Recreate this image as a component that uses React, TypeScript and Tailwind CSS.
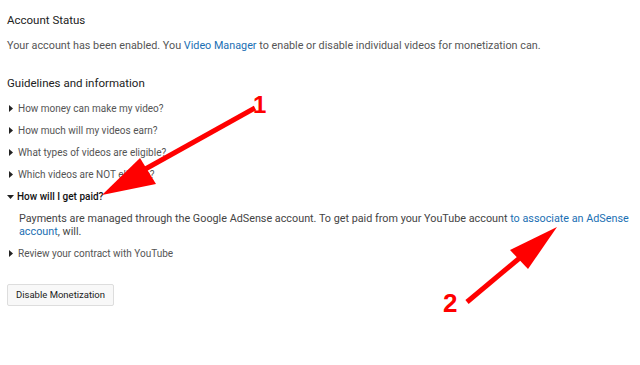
import React from "react";

const items = [
  "How money can make my video?",
  "How much will my videos earn?",
  "What types of videos are eligible?",
  "Which videos are NOT eligible?",
];

function Caret({ open }: { open?: boolean }) {
  return (
    <svg width="7" height="7" viewBox="0 0 7 7" className="shrink-0">
      {open ? <path d="M0 2 L7 2 L3.5 6 Z" fill="#222" /> : <path d="M1 0 L5 3.5 L1 7 Z" fill="#222" />}
    </svg>
  );
}

function Arrows() {
  return (
    <svg className="absolute inset-0 pointer-events-none" width="640" height="365" viewBox="0 0 640 365">
      <line x1="255" y1="108" x2="140" y2="172" stroke="#f00" strokeWidth="5" />
      <path d="M102 195 L140 158 L156 184 Z" fill="#f00" />
      <text x="253" y="113" fill="#f00" fontSize="24" fontWeight="bold" fontFamily="Liberation Sans, Arial, sans-serif">1</text>
      <line x1="467" y1="302" x2="522" y2="256" stroke="#f00" strokeWidth="5" />
      <path d="M557 227 L510 250 L528 269 Z" fill="#f00" />
      <text x="443" y="312" fill="#f00" fontSize="26" fontWeight="bold" fontFamily="Liberation Sans, Arial, sans-serif">2</text>
    </svg>
  );
}

export default function App() {
  return (
    <div className="relative w-[640px] h-[365px] bg-white overflow-hidden font-['Roboto',sans-serif]">
      <div className="px-[7px] pt-[13px]">
        <h2 className="text-[11.5px] leading-[15px] text-[#222]">Account Status</h2>
        <p className="mt-[11px] text-[10.8px] leading-[14px] text-[#555]">
          Your account has been enabled. You <span className="text-[#1a6fb3]">Video Manager</span> to enable or disable
          individual videos for monetization can.
        </p>
        <h2 className="mt-[23px] text-[11.5px] leading-[15px] text-[#222]">Guidelines and information</h2>
        <ul className="mt-[6px] text-[10px] text-[#555]">
          {items.map((t) => (
            <li key={t} className="flex items-center gap-[3px] h-[22px] pl-[1px]">
              <Caret />
              <span>{t}</span>
            </li>
          ))}
          <li className="flex items-center gap-[3px] h-[22px]">
            <Caret open />
            <span className="text-[#111] font-medium">How will I get paid?</span>
          </li>
          <li className="pl-[12px] pt-[5px] pb-[4px] text-[10.8px] leading-[13px] text-[#444]">
            Payments are managed through the Google AdSense account. To get paid from your YouTube account{" "}
            <span className="text-[#1a6fb3]">to associate an AdSense account</span>, will.
          </li>
          <li className="flex items-center gap-[3px] h-[22px] pl-[1px]">
            <Caret />
            <span>Review your contract with YouTube</span>
          </li>
        </ul>
        <button className="mt-[20px] h-[22px] px-[8px] border border-[#ddd] bg-[#f8f8f8] rounded-[2px] text-[9.5px] text-[#222]">
          Disable Monetization
        </button>
      </div>
      <Arrows />
    </div>
  );
}
